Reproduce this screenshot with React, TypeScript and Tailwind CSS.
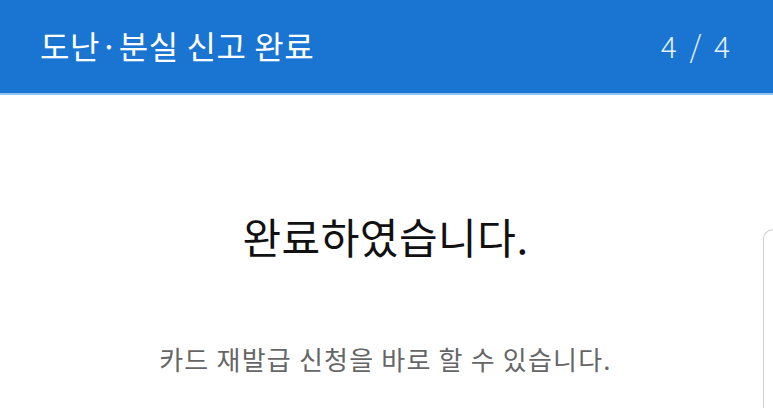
const KR = { fontFamily: '"Noto Sans CJK KR", "Noto Sans", sans-serif' }

export default function App() {
  return (
    <div className="w-[773px] h-[408px] overflow-hidden bg-white flex flex-col" style={KR}>
      {/* Header */}
      <header className="h-[95px] shrink-0 bg-[#1a75d2] border-b-2 border-[#8fc4f5] flex items-center justify-between pl-[40px] pr-[40px]">
        <h1 className="text-white text-[32px] font-normal tracking-[0.6px] leading-none -mt-[3px]">도난·분실 신고 완료</h1>
        <span className="text-[#e3f0fc] text-[30px] font-light leading-none tracking-[3px] -mt-[3px]">4 / 4</span>
      </header>

      {/* Body */}
      <div className="flex-1 flex">
        <div className="w-[763px] shrink-0 flex flex-col items-center">
          <p className="mt-[120px] pl-[8px] text-[42px] leading-none text-[#111] tracking-[0.5px]">완료하였습니다.</p>
          <p className="mt-[89px] pl-[8px] text-[26px] leading-none text-[#666] tracking-[1.2px]">카드 재발급 신청을 바로 할 수 있습니다.</p>
        </div>
        {/* Next card peeking */}
        <div className="flex-1 mt-[134px] border-l border-t border-[#cfcfcf] rounded-tl-[30px]" />
      </div>
    </div>
  )
}
